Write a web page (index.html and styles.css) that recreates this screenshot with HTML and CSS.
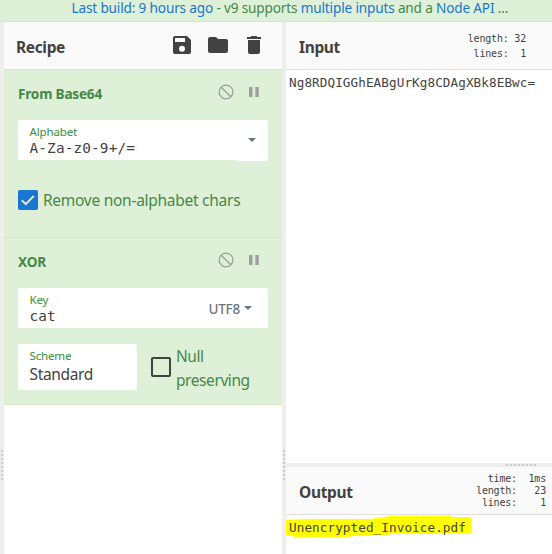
FILE: index.html
```
<!DOCTYPE html>
<html lang="en">
<head>
<meta charset="utf-8">
<title>Recipe</title>
<link rel="stylesheet" href="styles.css">
</head>
<body>
<svg class="symbols" aria-hidden="true">
  <symbol id="ban" viewBox="0 0 16 16"><circle cx="8" cy="8" r="6.9"/><path d="M3.2 3.2l9.6 9.6"/></symbol>
  <symbol id="pause" viewBox="0 0 10 10"><path d="M0 0h3.4v10H0zM6.4 0h3.4v10H6.4z"/></symbol>
</svg>
<div class="banner"><span class="notice"><a>Last build: 9 hours ago</a> - v9 supports <a>multiple inputs</a> and a <a>Node API</a> ...</span></div>
<main class="workspace">
  <section class="recipe">
    <header class="title recipe-title">
      <h2>Recipe</h2>
      <div class="tools">
        <svg width="18" height="18" viewBox="0 0 18 18"><path fill-rule="evenodd" d="M2 0h12l4 4v12a2 2 0 0 1-2 2H2a2 2 0 0 1-2-2V2a2 2 0 0 1 2-2zM2 2v4h10V2zM9 9.8a3 3 0 1 0 0 6 3 3 0 0 0 0-6z"/></svg>
        <svg width="20" height="16" viewBox="0 0 20 16"><path d="M2 0h6l2 2h8a2 2 0 0 1 2 2v10a2 2 0 0 1-2 2H2a2 2 0 0 1-2-2V2a2 2 0 0 1 2-2z"/></svg>
        <svg width="14" height="18" viewBox="0 0 14 18"><path d="M0 1h3.5l1-1h5l1 1H14v2H0zM1 4h12v12a2 2 0 0 1-2 2H3a2 2 0 0 1-2-2z"/></svg>
      </div>
    </header>
    <article class="operation">
      <div class="op-head"><h3>From Base64</h3><svg class="ban"><use href="#ban"/></svg><svg class="pause"><use href="#pause"/></svg></div>
      <div class="field">
        <div class="value-box"><label>Alphabet</label><span class="mono">A-Za-z0-9+/=</span></div>
        <div class="drop drop-tall"><i class="caret"></i></div>
      </div>
      <div class="check-row">
        <span class="box checked"><svg width="20" height="20" viewBox="0 0 20 20"><path d="M3.8 10.3l4 3.9 8-8.3"/></svg></span>
        <span class="t-remove">Remove non-alphabet chars</span>
      </div>
    </article>
    <article class="operation">
      <div class="op-head"><h3>XOR</h3><svg class="ban"><use href="#ban"/></svg><svg class="pause"><use href="#pause"/></svg></div>
      <div class="field">
        <div class="value-box"><label>Key</label><span class="mono">cat</span></div>
        <div class="drop drop-format"><span>UTF8</span><i class="caret"></i></div>
      </div>
      <div class="pair">
        <div class="field scheme"><div class="value-box"><label>Scheme</label><span class="t-standard">Standard</span></div></div>
        <span class="box"></span>
        <div class="null">Null<br>preserving</div>
      </div>
    </article>
  </section>
  <div class="gutter"></div>
  <section class="io">
    <header class="title"><h2>Input</h2><pre class="stats in-stats">length: 32
 lines:  1</pre></header>
    <div class="input-text">Ng8RDQIGGhEABgUrKg8CDAgXBk8EBwc=</div>
    <div class="split"></div>
    <header class="title"><h2>Output</h2><pre class="stats out-stats">  time:  1ms
length:   23
 lines:    1</pre></header>
    <div class="output-text"><svg class="marker" width="186" height="22" viewBox="0 0 186 22"><path d="M0 4L18 3H86L89 2 98 1 104 0H166V1H185V17H156L150 18H105L100 19H88V20H68L62 21H8V20L0 19z"/></svg><span>Unencrypted_Invoice.pdf</span></div>
  </section>
</main>
</body>
</html>
```

FILE: styles.css
```
* { box-sizing: border-box; }
body { margin: 0; width: 552px; height: 554px; overflow: hidden; background: #fff; color: #424242; font-family: "Noto Sans", sans-serif; font-size: 16px; }
h2, h3, pre { margin: 0; white-space: pre; }
svg { display: block; flex: none; }
.symbols { display: none; }
.banner { height: 22px; padding-left: 71.5px; background: #dff0d8; border-bottom: 1px solid #ddd; color: #468847; font-size: 13.6px; letter-spacing: -.16px; line-height: 15px; white-space: nowrap; }
.banner a { color: #1976d2; }
.workspace { display: flex; height: 532px; }
.recipe { width: 282px; border-left: 4px solid #eee; }
.gutter { width: 4px; background: #eee; }
.recipe, .gutter { position: relative; }
.recipe::before, .gutter::before { content: ""; position: absolute; left: 1px; top: 428px; width: 2px; height: 30px; background: repeating-linear-gradient(#ccc 0 2px, transparent 2px 4px); }
.recipe::before { left: -3px; }
.io { width: 266px; }
.title { display: flex; height: 48px; align-items: center; justify-content: space-between; padding-left: 13px; background: #fafafa; border-bottom: 1px solid #ddd; }
.recipe-title { padding-left: 12px; }
h2 { font-size: 15.5px; letter-spacing: -.35px; line-height: 24px; padding-top: 2px; }
.tools { display: flex; align-items: center; gap: 17px; margin: -2px 21px 0 0; fill: #424242; }
.tools svg:last-child { margin-left: 2px; }
.operation { height: 168px; padding: 0 14px; background: #dff0d8; border-bottom: 1px solid #d0e9c0; color: #468847; }
.operation + .operation { height: 167px; }
.op-head { display: flex; height: 50px; align-items: center; }
h3 { font-size: 13.6px; letter-spacing: -.2px; line-height: 20px; margin: -3px auto 0 0; }
.ban { width: 16px; height: 16px; margin-top: -6px; fill: none; stroke: #9e9e9e; stroke-width: 1.3; }
.pause { width: 10px; height: 10px; margin: -6px 9px 0 15px; fill: #9e9e9e; }
.field { display: flex; height: 40px; width: 250px; background: #fff; border-radius: 3px 3px 0 0; }
.value-box { display: flex; flex-direction: column; padding: 4px 0 0 11.5px; white-space: nowrap; }
label { font-size: 11.6px; letter-spacing: -.2px; line-height: 16px; color: #388e3c; }
.mono { font: 14.4px/16px "DejaVu Sans Mono", monospace; letter-spacing: .13px; color: #424242; }
.drop { display: flex; align-items: center; margin-left: auto; padding-right: 16px; gap: 4px; color: #6c757d; font-size: 13.5px; letter-spacing: -.2px; font-weight: 500; }
.drop-tall { width: 32px; height: 41px; padding: 0 12px 1px 0; justify-content: flex-end; background: #fff; border-radius: 0 3px 3px 0; }
.drop-format span { padding-top: 1px; }
.caret { width: 8px; border: 4px solid transparent; border-top-color: #6c757d; border-bottom: 0; }
.check-row { display: flex; align-items: center; height: 20px; margin-top: 30px; gap: 5px; white-space: nowrap; font-size: 15.5px; letter-spacing: -.27px; }
.box { width: 20px; height: 20px; border: 2px solid #424242; border-radius: 2px; flex: none; }
.checked { border: 0; background: #1976d2; }
.box path { fill: none; stroke: #dff0d8; stroke-width: 2; }
.pair { display: flex; margin-top: 16px; }
.scheme { width: 119px; height: 46px; }
.pair .box { margin: 13px 5px 0 14px; }
.null { line-height: 24px; font-size: 15.5px; letter-spacing: -.42px; }
.t-standard { line-height: 24px; margin-top: -2px; font-size: 15.5px; letter-spacing: -.35px; color: #424242; }
.stats { font: 10px/15px "DejaVu Sans Mono", monospace; letter-spacing: -.2px; }
.in-stats { margin-right: 26px; }
.out-stats { line-height: 12px; margin-right: 6px; }
.input-text { height: 393px; padding: 4px 3px; font: 12.6px/18px "DejaVu Sans Mono", monospace; letter-spacing: .11px; }
.split { height: 4px; padding: 1px 0 0 220px; background: #eee; }
.split::before { content: ""; display: block; width: 30px; height: 2px; background: repeating-linear-gradient(90deg, #ccc 0 2px, transparent 2px 4px); }
.output-text { position: relative; padding: 4px 3px; font: 12.6px/18px "DejaVu Sans Mono", monospace; letter-spacing: .11px; }
.output-text span { position: relative; }
.marker { position: absolute; left: 0; top: 1px; fill: #ff0; }
```
